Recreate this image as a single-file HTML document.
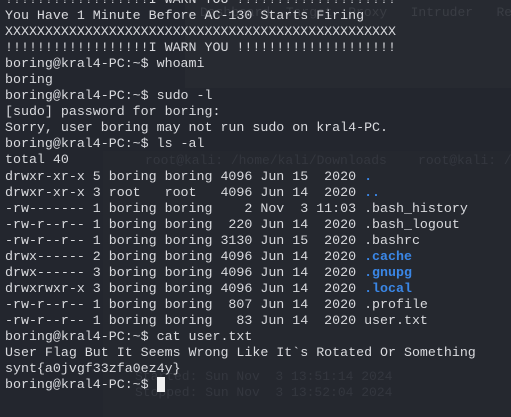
<!DOCTYPE html>
<html><head><meta charset="utf-8"><style>
html,body{margin:0;padding:0;width:511px;height:417px;overflow:hidden;background:#23262e;}
.bg{position:absolute;left:0;top:0;width:511px;height:417px;}
pre{position:absolute;left:5px;top:-8px;margin:0;font-family:"Liberation Mono",monospace;font-size:13.3px;line-height:16.04px;color:#d9dade;white-space:pre;}
.b{color:#3a86e6;font-weight:bold;}
.f{position:absolute;font-family:"Liberation Mono",monospace;font-size:13px;color:#34373f;white-space:pre;}
</style></head><body>
<div class="bg">
<div style="position:absolute;left:185px;top:0;width:326px;height:88px;background:#272a31"></div>
<div style="position:absolute;left:103px;top:151px;width:408px;height:266px;background:#25282f"></div>
<div class="f" style="left:200px;top:5px;color:#3a3d44">Dashboard  Target  Proxy   Intruder   Repea</div>
<div class="f" style="left:145px;top:153px;color:#34373f">root@kali: /home/kali/Downloads    root@kali: /</div>
<div class="f" style="left:135px;top:385px">Stopped: Sun Nov  3 13:52:04 2024</div>
<div class="f" style="left:135px;top:369px">Started: Sun Nov  3 13:51:14 2024</div>
</div>
<pre>!!!!!!!!!!!!!!!!!!I WARN YOU !!!!!!!!!!!!!!!!!!!!
You Have 1 Minute Before AC-130 Starts Firing
XXXXXXXXXXXXXXXXXXXXXXXXXXXXXXXXXXXXXXXXXXXXXXXXX
!!!!!!!!!!!!!!!!!!I WARN YOU !!!!!!!!!!!!!!!!!!!!
boring@kral4-PC:~$ whoami
boring
boring@kral4-PC:~$ sudo -l
[sudo] password for boring:
Sorry, user boring may not run sudo on kral4-PC.
boring@kral4-PC:~$ ls -al
total 40
drwxr-xr-x 5 boring boring 4096 Jun 15  2020 <span class="b">.</span>
drwxr-xr-x 3 root   root   4096 Jun 14  2020 <span class="b">..</span>
-rw------- 1 boring boring    2 Nov  3 11:03 .bash_history
-rw-r--r-- 1 boring boring  220 Jun 14  2020 .bash_logout
-rw-r--r-- 1 boring boring 3130 Jun 15  2020 .bashrc
drwx------ 2 boring boring 4096 Jun 14  2020 <span class="b">.cache</span>
drwx------ 3 boring boring 4096 Jun 14  2020 <span class="b">.gnupg</span>
drwxrwxr-x 3 boring boring 4096 Jun 14  2020 <span class="b">.local</span>
-rw-r--r-- 1 boring boring  807 Jun 14  2020 .profile
-rw-r--r-- 1 boring boring   83 Jun 14  2020 user.txt
boring@kral4-PC:~$ cat user.txt
User Flag But It Seems Wrong Like It`s Rotated Or Something
synt{a0jvgf33zfa0ez4y}
boring@kral4-PC:~$ <span style="background:#f0f0f0">&nbsp;</span></pre>
</body></html>
